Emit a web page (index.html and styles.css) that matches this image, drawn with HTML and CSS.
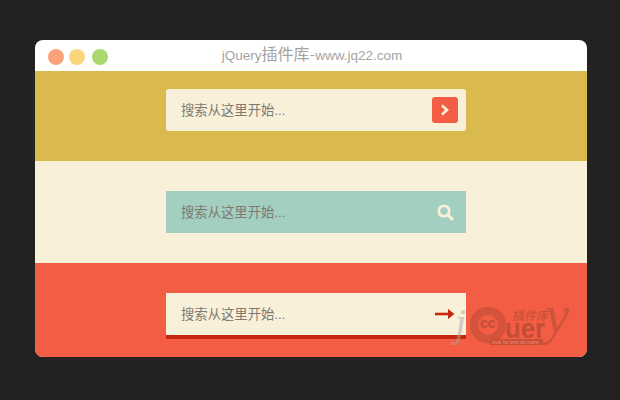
FILE: index.html
```html
<!DOCTYPE html>
<html lang="zh">
<head>
<meta charset="utf-8">
<title>jQuery插件库-www.jq22.com</title>
<link rel="stylesheet" href="styles.css">
</head>
<body>
<main class="window">
  <header class="titlebar">
    <div class="dots"><span class="dot dot-red"></span><span class="dot dot-yellow"></span><span class="dot dot-green"></span></div>
    <div class="title">jQuery<span class="title-cjk">插件库-</span>www.jq22.com</div>
  </header>
  <section class="band band-gold">
    <div class="search search-rounded">
      <span class="placeholder">搜索从这里开始...</span>
      <span class="go-button">
        <svg width="10" height="12" viewBox="0 0 10 12"><path d="M2 1.5 L7 6 L2 10.5" fill="none" stroke="#f9f0da" stroke-width="2.6"/></svg>
      </span>
    </div>
  </section>
  <section class="band band-cream">
    <div class="search search-teal">
      <span class="placeholder">搜索从这里开始...</span>
      <svg class="icon-search" width="17" height="17" viewBox="0 0 17 17"><circle cx="7" cy="7" r="5.2" fill="none" stroke="#f9f0da" stroke-width="2.8"/><path d="M10.8 10.8 L15 15" stroke="#f9f0da" stroke-width="3" stroke-linecap="round"/></svg>
    </div>
  </section>
  <section class="band band-red">
    <div class="search search-underline">
      <span class="placeholder">搜索从这里开始...</span>
      <svg class="icon-arrow" width="20" height="10" viewBox="0 0 20 10"><path d="M0 3.7 H14 V6.3 H0 Z" fill="#c4290f"/><path d="M13 0 L19.5 5 L13 10 Z" fill="#c4290f"/></svg>
    </div>
  </section>
  <svg class="watermark" width="135" height="54" viewBox="0 0 135 54">
    <text x="7" y="33" class="wm-j">j</text>
    <circle cx="40" cy="22" r="14" class="wm-ring"/>
    <circle cx="40" cy="22" r="17.5" class="wm-ring-teeth"/>
    <text x="32" y="25" class="wm-eyes">cc</text>
    <text x="57" y="35" class="wm-uer" textLength="40" lengthAdjust="spacingAndGlyphs">uer</text>
    <text x="64" y="17" class="wm-cn">插件库</text>
    <text x="97" y="30" class="wm-y">y</text>
    <rect x="42" y="36" width="53" height="6" class="wm-bar"/>
    <text x="44" y="41" class="wm-small">look for less do more</text>
  </svg>
</main>
</body>
</html>
```
FILE: styles.css
```css
* { box-sizing: border-box; }
html, body { margin: 0; height: 100%; }
body {
  background: #222;
  padding: 40px 33px 43px 35px;
  font-family: "Liberation Sans", "Noto Sans CJK SC", sans-serif;
}
.window {
  position: relative;
  width: 552px;
  height: 317px;
  border-radius: 8px;
  overflow: hidden;
  background: #fff;
}
.titlebar {
  position: relative;
  height: 31px;
  display: flex;
  align-items: center;
  justify-content: center;
  padding-left: 2px;
}
.dots {
  position: absolute;
  left: 13px;
  top: 9px;
  display: flex;
  gap: 5px;
}
.dot { width: 16px; height: 16px; border-radius: 50%; }
.dot-yellow + .dot-green { margin-left: 2px; }
.dot-red { background: #fba47c; }
.dot-yellow { background: #f9d67e; }
.dot-green { background: #a9d86e; }
.title {
  color: #a3a3a3;
  font-size: 13.5px;
  line-height: 31px;
}
.title-cjk {
  font-family: "Noto Sans CJK SC", sans-serif;
  font-size: 16px;
  line-height: 16px;
}
.band { display: flex; padding-left: 131px; }
.band-gold { height: 90px; padding-top: 18px; background: #dab94f; }
.band-cream { height: 102px; padding-top: 30px; background: #f9f0da; }
.band-red { height: 94px; padding-top: 30px; background: #f35d43; }
.search {
  width: 300px;
  height: 42px;
  display: flex;
  align-items: center;
  justify-content: space-between;
  padding-left: 15px;
  background: #f9f0da;
  flex: none;
}
.placeholder {
  color: #7d7a72;
  font-size: 13.333px;
  line-height: 42px;
  padding-top: 1px;
}
.search-rounded { border-radius: 3px; padding-right: 8px; }
.search-teal { background: #a3cfc1; padding-right: 12px; }
.search-underline {
  height: 46px;
  border-bottom: 4px solid #c4290f;
  padding-right: 11px;
}
.go-button {
  width: 26px;
  height: 26px;
  border-radius: 3px;
  background: #f35d43;
  display: flex;
  align-items: center;
  justify-content: center;
}
.watermark {
  position: absolute;
  left: 413px;
  top: 263px;
}
.wm-ring { fill: none; stroke: #d4533b; stroke-width: 8px; }
.wm-ring-teeth { fill: none; stroke: #d4533b; stroke-width: 1.5px; stroke-dasharray: 3 1.5; }
.wm-bar { fill: #c94f39; }
.wm-j { font: italic 40px "Liberation Serif", serif; fill: #a8a8a0; opacity: .5; }
.wm-eyes { font: bold 14px "Liberation Sans", sans-serif; fill: #c24d39; }
.wm-uer { font: bold 28px "Liberation Sans", sans-serif; fill: #c24d39; }
.wm-cn { font: italic 12px "Noto Sans CJK SC", sans-serif; fill: #c24d39; }
.wm-y { font: italic 55px "Liberation Serif", serif; fill: #cf533c; }
.wm-small { font: 5px "Liberation Sans", sans-serif; fill: #f08a70; }
```
